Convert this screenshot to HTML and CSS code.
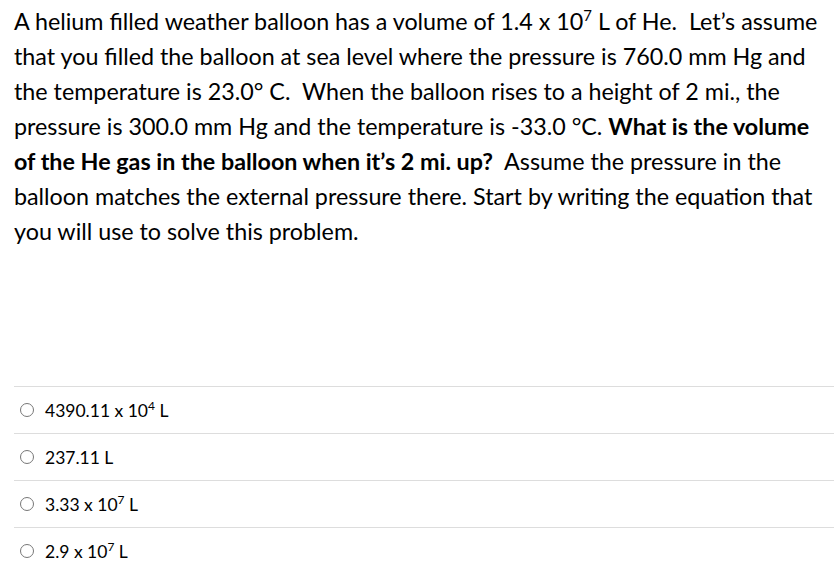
FILE: index.html
```html
<!DOCTYPE html>
<html>
<head>
<meta charset="utf-8">
<link rel="stylesheet" href="styles.css">
</head>
<body>
<div class="question">
  <p class="prompt">A helium filled weather balloon has a volume of 1.4 x 10<sup>7</sup> L of He.&nbsp; Let’s assume that you filled the balloon at sea level where the pressure is 760.0 mm Hg and the temperature is 23.0° C.&nbsp; When the balloon rises to a height of 2 mi., the pressure is 300.0 mm Hg and the temperature is -33.0 °C. <strong>What is the volume of the He gas in the balloon when it’s 2 mi. up?</strong>&nbsp; Assume the pressure in the balloon matches the external pressure there. Start by writing the equation that you will use to solve this problem.</p>
  <div class="answers">
    <label class="answer"><span class="radio"></span><span class="text">4390.11 x 10<sup>4</sup> L</span></label>
    <label class="answer"><span class="radio"></span><span class="text">237.11 L</span></label>
    <label class="answer"><span class="radio"></span><span class="text">3.33 x 10<sup>7</sup> L</span></label>
    <label class="answer"><span class="radio"></span><span class="text">2.9 x 10<sup>7</sup> L</span></label>
  </div>
</div>
</body>
</html>
```
FILE: styles.css
```css
html, body {
  margin: 0;
  padding: 0;
  background: #fff;
}
body {
  font-family: Lato, "Open Sans", sans-serif;
  color: #2d3b45;
}
.question {
  padding: 4px 1px 0 14px;
}
.prompt {
  margin: 0 8px 0 0;
  font-size: 23.3px;
  line-height: 35px;
  color: #000;
  height: 382px;
}
.prompt sup {
  font-size: 15px;
  line-height: 0;
  vertical-align: 9px;
}
.answers {
  display: flex;
  flex-direction: column;
}
.answer {
  display: flex;
  align-items: center;
  height: 46px;
  border-top: 1px solid #dddddd;
  font-size: 17.5px;
  color: #000;
}
.radio {
  width: 12px;
  height: 12px;
  border: 1px solid #777;
  border-radius: 50%;
  margin: 0 11px 0 6px;
  flex: none;
}
.text sup {
  font-size: 12px;
  line-height: 0;
  vertical-align: 7px;
}
```
